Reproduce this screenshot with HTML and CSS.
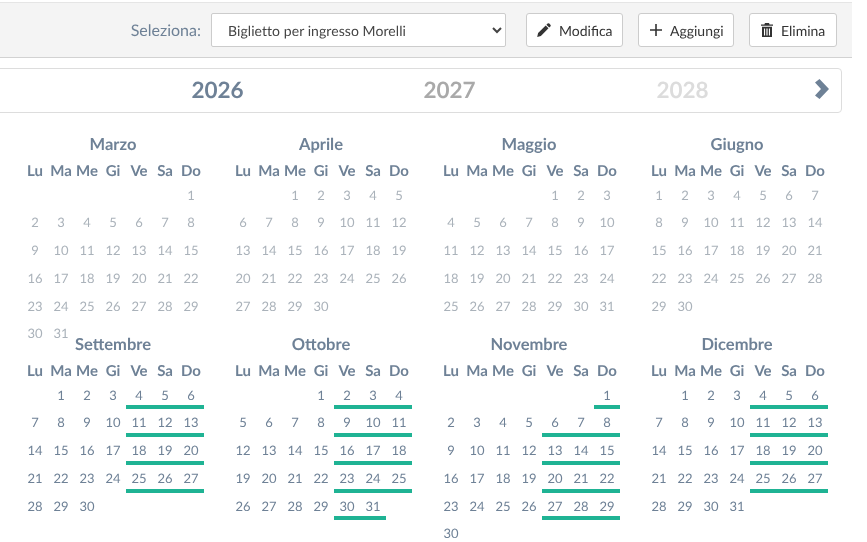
FILE: index.html
```html
<!DOCTYPE html>
<html lang="it">
<head>
<meta charset="utf-8">
<title>Calendario</title>
<link rel="stylesheet" href="styles.css">
</head>
<body>
<div class="page">
<div class="toolbar">
  <label class="sel-label" for="sel">Seleziona:</label>
  <select id="sel" class="sel"><option>Biglietto per ingresso Morelli</option></select>
  <button class="btn btn-mod"><svg class="ico" viewBox="0 0 16 16"><path d="M11.6 1.6a1.2 1.2 0 0 1 1.7 0l1.1 1.1a1.2 1.2 0 0 1 0 1.7l-1.2 1.2-2.8-2.8zM9.7 3.5l2.8 2.8-7.6 7.6-3.7 1 .9-3.8z"/></svg>Modifica</button>
  <button class="btn btn-add"><svg class="ico" viewBox="0 0 16 16"><path d="M7.2 2h1.6v5.2H14v1.6H8.8V14H7.2V8.8H2V7.2h5.2z"/></svg>Aggiungi</button>
  <button class="btn btn-del"><svg class="ico" viewBox="0 0 16 16"><path d="M6 1h4l.6 1.4H14v1.4H2V2.4h3.4zM3 4.8h10V15H3zm2 1.6V13.6h1.1V6.4zm2.4 0V13.6h1.2V6.4zm2.5 0V13.6H11V6.4z" fill-rule="evenodd"/></svg>Elimina</button>
</div>
<div class="years">
  <span class="y y1">2026</span><span class="y y2">2027</span><span class="y y3">2028</span>
  <svg class="next" viewBox="0 0 14 20"><path d="M4.5 0L14 10 4.5 20 0 16.5 6 10 0 3.5z"/></svg>
</div>
<div class="cal" id="cal"></div>
</div>
<script src="cal.js"></script>
</body>
</html>
```
FILE: cal.js
```js
var months = [
  ["Marzo", 6, 31, "past", []],
  ["Aprile", 2, 30, "past", []],
  ["Maggio", 4, 31, "past", []],
  ["Giugno", 0, 30, "past", []],
  ["Settembre", 1, 30, "", [4,5,6,11,12,13,18,19,20,25,26,27]],
  ["Ottobre", 3, 31, "", [2,3,4,9,10,11,16,17,18,23,24,25,30,31]],
  ["Novembre", 6, 30, "", [1,6,7,8,13,14,15,20,21,22,27,28,29]],
  ["Dicembre", 1, 31, "", [4,5,6,11,12,13,18,19,20,25,26,27]]
];
var heads = ["Lu","Ma","Me","Gi","Ve","Sa","Do"];
var html = "";
months.forEach(function (m) {
  html += '<div class="month ' + m[3] + '"><div class="mname">' + m[0] + '</div><div class="grid">';
  heads.forEach(function (h) { html += '<div class="wd">' + h + '</div>'; });
  for (var i = 0; i < m[1]; i++) html += '<div class="d"></div>';
  for (var d = 1; d <= m[2]; d++) {
    html += '<div class="d' + (m[4].indexOf(d) >= 0 ? ' on' : '') + '">' + d + '</div>';
  }
  html += '</div></div>';
});
document.getElementById("cal").innerHTML = html;
```
FILE: styles.css
```css
* { box-sizing: border-box; }
html, body { margin: 0; padding: 0; background: #fff; }
body { font-family: Lato, "Open Sans", sans-serif; color: #6e8196; overflow: hidden; text-rendering: geometricPrecision; }
.page { width: 867px; height: 542px; overflow: hidden; will-change: transform; }
.toolbar {
  width: 852px; height: 56px; margin-top: 2px;
  background: #f4f4f4;
  border-top: 1px solid #e5e5e5; border-bottom: 1px solid #d2d2d2;
  display: flex; align-items: center; justify-content: flex-end;
  padding-right: 15px;
}
.sel-label { font-size: 16px; color: #6e8196; margin-right: 10px; }
.sel {
  width: 295px; height: 34px; margin-right: 20px; padding-left: 12px;
  font-family: Lato, sans-serif; font-size: 14px; letter-spacing: .07px; color: #444;
  background: #fff; border: 1px solid #ccc; border-radius: 2px;
  text-rendering: geometricPrecision;
}
.btn {
  height: 34px; padding: 0 0 0 9px;
  font-family: Lato, sans-serif; font-size: 14px; color: #333;
  background: #fff; border: 1px solid #ccc; border-radius: 3px;
  display: flex; align-items: center;
  text-rendering: geometricPrecision;
}
.btn-mod { margin-right: 15px; width: 97px; }
.btn-add { margin-right: 15px; width: 96px; }
.btn-del { width: 88px; }
.ico { width: 16px; height: 16px; fill: #333; margin-right: 7px; flex: none; }
.btn-add .ico, .btn-del .ico { margin-right: 6px; }
.years {
  position: relative;
  width: 848px; height: 45px; margin-top: 10px; margin-left: -6px;
  border: 1px solid #ddd; border-radius: 4px;
  font-size: 22.5px; font-weight: 700;
}
.y { position: absolute; top: 7px; line-height: 28px; transform: translateX(-50%); }
.y1 { left: 222.5px; color: #6e8196; }
.y2 { left: 454.5px; color: #a9a9a9; }
.y3 { left: 687.5px; color: #dcdcdc; }
.next { position: absolute; right: 12px; top: 10px; width: 14px; height: 20px; fill: #6e8196; }
.cal {
  display: grid; grid-template-columns: repeat(4, 182px); column-gap: 26px;
  grid-auto-rows: 200px; padding-left: 22px; padding-top: 20.5px;
}
.mname { text-align: center; font-size: 16.5px; font-weight: 700; line-height: 21px; height: 27px; color: #6e8196; }
.grid { display: grid; grid-template-columns: repeat(7, 26px); grid-template-rows: 21px; grid-auto-rows: 27.75px; }
.wd { text-align: center; font-size: 15px; font-weight: 700; line-height: 21px; color: #6e8196; }
.d { text-align: center; font-size: 13px; line-height: 26px; color: #6e8196; }
.past .d { color: #aab2ba; }
.d.on { border-bottom: 4px solid #1fb394; }
```
